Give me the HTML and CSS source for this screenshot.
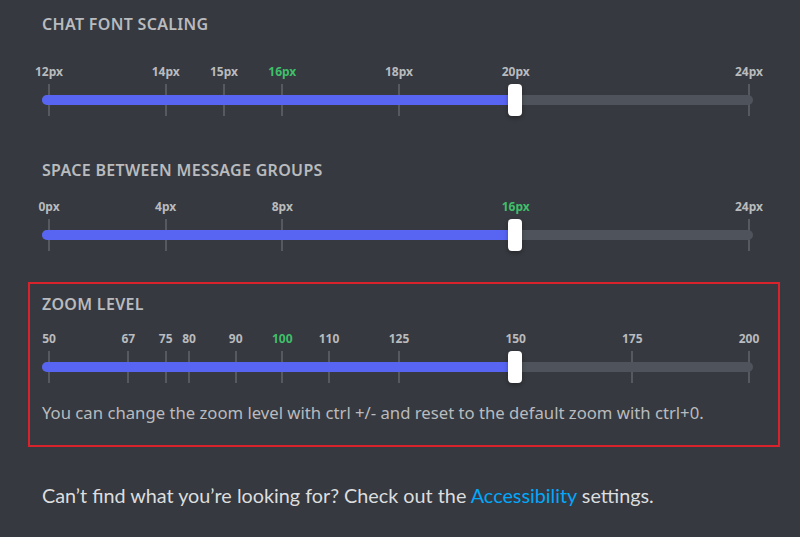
FILE: index.html
```html
<!DOCTYPE html>
<html>
<head>
<meta charset="utf-8">
<link rel="stylesheet" href="styles.css">
</head>
<body>
<div class="page">
  <section class="section first">
    <h2 class="title">Chat Font Scaling</h2>
    <div class="slider gap-a">
      <div class="tick" style="left:6px"></div><span class="mark" style="left:7px">12px</span>
      <div class="tick" style="left:122.7px"></div><span class="mark" style="left:123.7px">14px</span>
      <div class="tick" style="left:181px"></div><span class="mark" style="left:182px">15px</span>
      <div class="tick" style="left:239.3px"></div><span class="mark default" style="left:240.3px">16px</span>
      <div class="tick" style="left:356px"></div><span class="mark" style="left:357px">18px</span>
      <div class="tick" style="left:472.7px"></div><span class="mark" style="left:473.7px">20px</span>
      <div class="tick" style="left:706px"></div><span class="mark" style="left:707px">24px</span>
      <div class="track"><div class="fill" style="width:473px"></div></div>
      <div class="thumb" style="left:466px"></div>
    </div>
  </section>

  <section class="section second">
    <h2 class="title">Space between message groups</h2>
    <div class="slider gap-b">
      <div class="tick" style="left:6px"></div><span class="mark" style="left:7px">0px</span>
      <div class="tick" style="left:122.7px"></div><span class="mark" style="left:123.7px">4px</span>
      <div class="tick" style="left:239.3px"></div><span class="mark" style="left:240.3px">8px</span>
      <div class="tick" style="left:472.7px"></div><span class="mark default" style="left:473.7px">16px</span>
      <div class="tick" style="left:706px"></div><span class="mark" style="left:707px">24px</span>
      <div class="track"><div class="fill" style="width:473px"></div></div>
      <div class="thumb" style="left:466px"></div>
    </div>
  </section>

  <section class="section highlighted">
    <h2 class="title">Zoom Level</h2>
    <div class="slider gap-c">
      <div class="tick" style="left:6px"></div><span class="mark" style="left:7px">50</span>
      <div class="tick" style="left:85.3px"></div><span class="mark" style="left:86.3px">67</span>
      <div class="tick" style="left:122.7px"></div><span class="mark" style="left:123.7px">75</span>
      <div class="tick" style="left:146px"></div><span class="mark" style="left:147px">80</span>
      <div class="tick" style="left:192.7px"></div><span class="mark" style="left:193.7px">90</span>
      <div class="tick" style="left:239.3px"></div><span class="mark default" style="left:240.3px">100</span>
      <div class="tick" style="left:286px"></div><span class="mark" style="left:287px">110</span>
      <div class="tick" style="left:356px"></div><span class="mark" style="left:357px">125</span>
      <div class="tick" style="left:472.7px"></div><span class="mark" style="left:473.7px">150</span>
      <div class="tick" style="left:589.3px"></div><span class="mark" style="left:590.3px">175</span>
      <div class="tick" style="left:706px"></div><span class="mark" style="left:707px">200</span>
      <div class="track"><div class="fill" style="width:473px"></div></div>
      <div class="thumb" style="left:466px"></div>
    </div>
    <p class="desc">You can change the zoom level with ctrl +/- and reset to the default zoom with ctrl+0.</p>
  </section>

  <p class="footer">Can’t find what you’re looking for? Check out the <a class="link" href="#">Accessibility</a> settings.</p>
</div>
</body>
</html>
```

FILE: styles.css
```css
html, body {
  margin: 0;
  padding: 0;
  background: #36393f;
}
body {
  font-family: "Noto Sans", "Open Sans", sans-serif;
  width: 800px;
  height: 537px;
  overflow: hidden;
}
.page {
  padding: 14px 0 0 28px;
  display: flex;
  flex-direction: column;
}
.section {
  display: flex;
  flex-direction: column;
  padding: 0 25px 0 14px;
}
.second {
  margin-top: 47px;
}
.highlighted {
  margin-top: 34px;
  border: 2px solid #d8232c;
  padding: 10px 25px 22px 12px;
  width: 711px;
}
.title {
  margin: 0;
  font-size: 16px;
  line-height: 20px;
  font-weight: 600;
  text-transform: uppercase;
  color: #b9bbbe;
  letter-spacing: 0.02em;
}
.slider {
  position: relative;
  width: 711px;
  height: 48px;
}
.gap-a { margin-top: 31px; }
.gap-b { margin-top: 20px; }
.gap-c { margin-top: 18px; }
.tick {
  position: absolute;
  top: 19px;
  width: 2px;
  height: 32px;
  background: #56595f;
}
.mark {
  position: absolute;
  top: 0;
  transform: translateX(-50%);
  font-size: 12px;
  line-height: 14px;
  font-weight: 700;
  color: #b9bbbe;
  white-space: nowrap;
}
.mark.default {
  color: #3fbf6a;
}
.track {
  position: absolute;
  left: 0;
  right: 0;
  top: 30px;
  height: 10px;
  border-radius: 5px;
  background: #4f545c;
}
.fill {
  height: 100%;
  border-radius: 5px 0 0 5px;
  background: #5865f2;
}
.thumb {
  position: absolute;
  top: 19px;
  width: 14px;
  height: 32px;
  border-radius: 4px;
  background: #ffffff;
  box-shadow: 0 2px 4px rgba(0,0,0,0.3);
}
.desc {
  margin: 23px 0 0 0;
  font-size: 16.7px;
  line-height: 20px;
  color: #b9bbbe;
}
.footer {
  margin: 36px 0 0 14px;
  font-family: "Lato", "Noto Sans", sans-serif;
  font-size: 19.8px;
  line-height: 24px;
  color: #dcddde;
}
.link {
  color: #00a8fc;
  text-decoration: none;
}
```
